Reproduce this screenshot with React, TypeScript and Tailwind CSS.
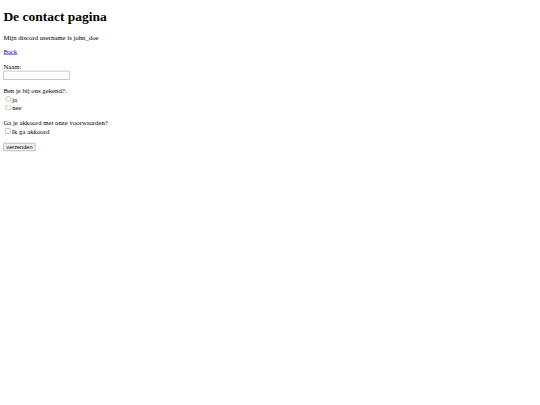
export default function App() {
  return (
    <div className="w-[540px] h-[405px] overflow-hidden bg-white">
      <div className="w-[1280px] origin-top-left scale-[0.421875] flow-root px-2 font-['Liberation_Serif',serif] text-[16px] leading-[normal] text-black">
        <h1 className="text-[32px] font-bold my-[21.44px]">De contact pagina</h1>
        <p className="my-4">Mijn discord username is john_doe</p>
        <p className="my-4">
          <a href="#" className="text-[#0000ee] underline">Back</a>
        </p>
        <form onSubmit={(e) => e.preventDefault()} className="pt-[2px]">
          <label htmlFor="naam">Naam:</label>
          <br />
          <input
            id="naam"
            type="text"
            className="w-[157px] h-[21px] border border-[#767676] rounded-[2px] px-[2px] text-[13.33px] font-['Liberation_Sans',sans-serif] align-bottom"
          />
          <br />
          <br />
          Ben je bij ons gekend?:
          <br />
          <input type="radio" name="gekend" className="mt-[3px] mr-[3px] ml-[5px]" />
          ja
          <br />
          <input type="radio" name="gekend" className="mt-[3px] mr-[3px] ml-[5px]" />
          nee
          <br />
          <br />
          Ga je akkoord met onze voorwaarden?
          <br />
          <input type="checkbox" className="my-[3px] mr-[3px] ml-[4px]" />
          Ik ga akkoord
          <br />
          <br />
          <button
            type="submit"
            className="bg-[#efefef] border border-[#767676] rounded-[2px] px-[6px] py-[1px] text-[13.33px] font-['Liberation_Sans',sans-serif] leading-[normal]"
          >
            verzenden
          </button>
        </form>
      </div>
    </div>
  );
}
